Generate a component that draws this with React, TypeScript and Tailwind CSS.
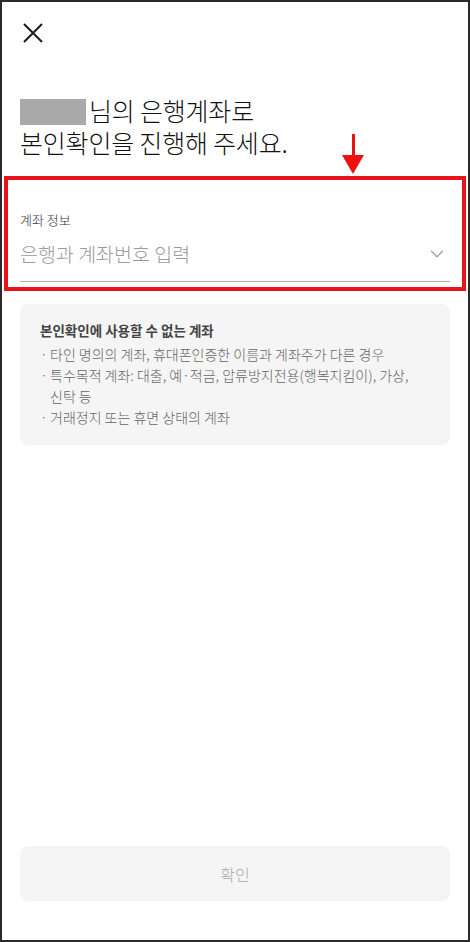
import { ChevronDown } from "lucide-react";

const font = { fontFamily: '"Noto Sans CJK KR", "Noto Sans", sans-serif' };

// Info bullets
const notes = [
  "타인 명의의 계좌, 휴대폰인증한 이름과 계좌주가 다른 경우",
  "특수목적 계좌: 대출, 예·적금, 압류방지전용(행복지킴이), 가상, 신탁 등",
  "거래정지 또는 휴면 상태의 계좌",
];

export default function App() {
  return (
    <div
      style={font}
      className="relative flex h-[942px] w-[470px] flex-col border-2 border-[#2a2a2a] bg-white break-keep"
    >
      {/* Close */}
      <div className="px-[20px] pt-[20px]">
        <svg width="22" height="22" viewBox="0 0 22 22" fill="none" className="text-[#1a1a1a]">
          <path d="M2 2L20 20M20 2L2 20" stroke="currentColor" strokeWidth="2" />
        </svg>
      </div>

      {/* Heading */}
      <h1 className="mt-[50px] px-[18px] text-[25px] font-light leading-[32px] tracking-[-0.2px] text-[#111]">
        <span className="mr-[3px] inline-block h-[26px] w-[66px] translate-y-[4px] bg-[#a9a9a9]" />
        님의 은행계좌로
        <br />
        본인확인을 진행해 주세요.
      </h1>

      {/* Arrow annotation */}
      <div className="absolute left-[340px] top-[132px] flex flex-col items-center">
        <div className="h-[21px] w-[3px] bg-[#ee1111]" />
        <div className="h-0 w-0 border-x-[11px] border-t-[19px] border-x-transparent border-t-[#ee1111]" />
      </div>

      {/* Account field */}
      <div className="mx-[2px] mt-[18px] border-4 border-[#e8131b] px-[12px] pt-[31px]">
        <div className="text-[13px] font-light leading-[18px] text-[#333]">계좌 정보</div>
        <div className="mt-[12px] flex items-center justify-between border-b border-[#ababab] pb-[14px]">
          <span className="text-[19.5px] font-light leading-[26px] text-[#9a9a9a]">은행과 계좌번호 입력</span>
          <ChevronDown size={22} strokeWidth={1.3} className="mr-[2px] text-[#9a9a9a]" />
        </div>
        <div className="h-[5px]" />
      </div>

      {/* Notice */}
      <div className="mx-[18px] mt-[13px] rounded-[8px] bg-[#f5f5f5] px-[20px] pb-[17px] pt-[16px]">
        <div className="text-[13.5px] font-bold leading-[20px] text-[#444]">
          본인확인에 사용할 수 없는 계좌
        </div>
        <ul className="mt-[4px]">
          {notes.map((n) => (
            <li key={n} className="flex text-[14px] font-light leading-[21px] text-[#666]">
              <span className="w-[10px] shrink-0">·</span>
              <span>{n}</span>
            </li>
          ))}
        </ul>
      </div>

      {/* Confirm */}
      <div className="mt-auto px-[18px] pb-[39px]">
        <button className="h-[55px] w-full rounded-[8px] bg-[#f5f5f5] text-[16px] font-light text-[#aaa]">
          확인
        </button>
      </div>
    </div>
  );
}
